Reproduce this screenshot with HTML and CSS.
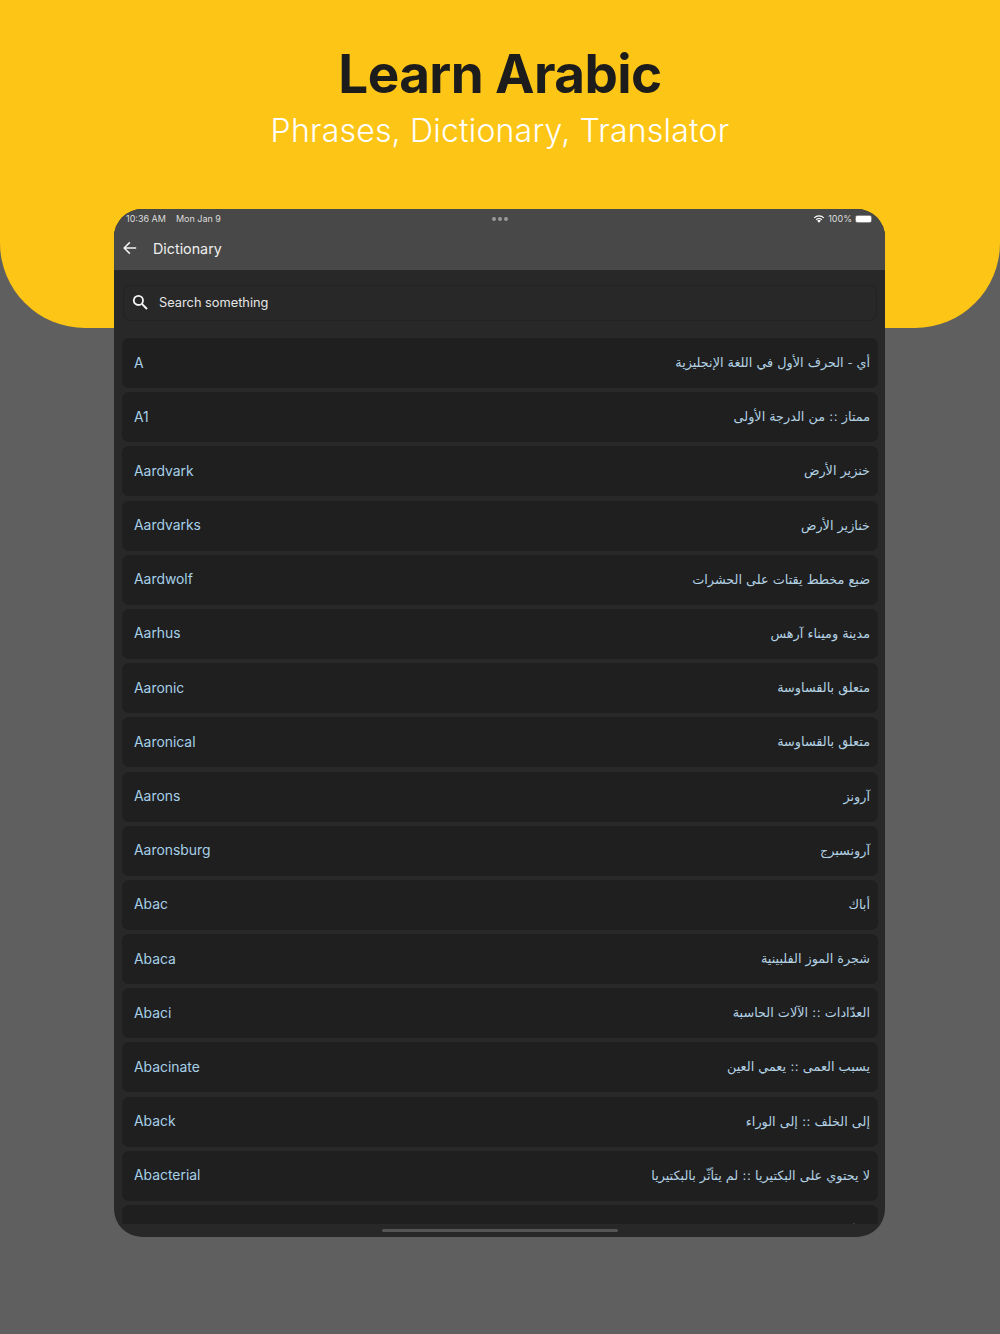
FILE: index.html
```html
<!DOCTYPE html>
<html lang="en">
<head>
    <meta charset="UTF-8">
    <meta name="viewport" content="width=device-width, initial-scale=1.0">
    <title>Learn Arabic</title>
    <link rel="stylesheet" href="styles.css">
</head>
<body>
    <header class="hero">
        <h1 class="hero-title">Learn Arabic</h1>
        <p class="hero-subtitle">Phrases, Dictionary, Translator</p>
    </header>

    <main class="tablet">
        <div class="topbar">
            <div class="status">
                <div class="status-left">
                    <span>10:36 AM</span>
                    <span>Mon Jan 9</span>
                </div>
                <div class="status-dots"><i></i><i></i><i></i></div>
                <div class="status-right">
                    <svg class="wifi" viewBox="0 0 16 12" width="12" height="9">
                        <path d="M8 11.6 5.6 9a3.4 3.4 0 0 1 4.8 0z" fill="#fff"/>
                        <path d="M3.7 7.1a6.1 6.1 0 0 1 8.6 0l-1 1.1a4.7 4.7 0 0 0-6.6 0z" fill="#fff"/>
                        <path d="M1.1 4.5a9.8 9.8 0 0 1 13.8 0l-1 1.1a8.4 8.4 0 0 0-11.8 0z" fill="#fff"/>
                    </svg>
                    <span>100%</span>
                    <div class="battery"><div class="battery-fill"></div></div>
                </div>
            </div>
            <div class="appbar">
                <svg class="back" viewBox="0 0 14 14" width="14" height="14">
                    <path d="M13.2 7H1.4M6.8 1.4 1.2 7l5.6 5.6" fill="none" stroke="#f1f1f1" stroke-width="1.5"/>
                </svg>
                <span class="appbar-title">Dictionary</span>
            </div>
        </div>

        <div class="content">
            <div class="search">
                <svg class="search-icon" viewBox="0 0 16 16" width="16" height="16">
                    <circle cx="6.4" cy="6.4" r="4.6" fill="none" stroke="#f4f4f4" stroke-width="1.8"/>
                    <path d="M9.9 9.9 15 15" fill="none" stroke="#f4f4f4" stroke-width="2"/>
                </svg>
                <span>Search something</span>
            </div>

            <div class="list">
                <div class="row"><span>A</span><span class="ar" dir="rtl">أي - الحرف الأول في اللغة الإنجليزية</span></div>
                <div class="row"><span>A1</span><span class="ar" dir="rtl">ممتاز :: من الدرجة الأولى</span></div>
                <div class="row"><span>Aardvark</span><span class="ar" dir="rtl">خنزير الأرض</span></div>
                <div class="row"><span>Aardvarks</span><span class="ar" dir="rtl">خنازير الأرض</span></div>
                <div class="row"><span>Aardwolf</span><span class="ar" dir="rtl">ضبع مخطط يقتات على الحشرات</span></div>
                <div class="row"><span>Aarhus</span><span class="ar" dir="rtl">مدينة وميناء آرهس</span></div>
                <div class="row"><span>Aaronic</span><span class="ar" dir="rtl">متعلق بالقساوسة</span></div>
                <div class="row"><span>Aaronical</span><span class="ar" dir="rtl">متعلق بالقساوسة</span></div>
                <div class="row"><span>Aarons</span><span class="ar" dir="rtl">آرونز</span></div>
                <div class="row"><span>Aaronsburg</span><span class="ar" dir="rtl">آرونسبرج</span></div>
                <div class="row"><span>Abac</span><span class="ar" dir="rtl">أباك</span></div>
                <div class="row"><span>Abaca</span><span class="ar" dir="rtl">شجرة الموز الفلبينية</span></div>
                <div class="row"><span>Abaci</span><span class="ar" dir="rtl">العدّادات :: الآلات الحاسبة</span></div>
                <div class="row"><span>Abacinate</span><span class="ar" dir="rtl">يسبب العمى :: يعمي العين</span></div>
                <div class="row"><span>Aback</span><span class="ar" dir="rtl">إلى الخلف :: إلى الوراء</span></div>
                <div class="row"><span>Abacterial</span><span class="ar" dir="rtl">لا يحتوي على البكتيريا :: لم يتأثّر بالبكتيريا</span></div>
                <div class="row"><span>Abacus</span><span class="ar" dir="rtl">العدّاد</span></div>
            </div>

            <div class="home-strip"><div class="home-bar"></div></div>
        </div>
    </main>
</body>
</html>
```

FILE: styles.css
```css
* {
    box-sizing: border-box;
}

body {
    margin: 0;
    height: 1334px;
    overflow: hidden;
    background-color: #5f5f5f;
    font-family: Inter, "DejaVu Sans", sans-serif;
}

.hero {
    height: 328px;
    padding-top: 42px;
    background: #fdc516;
    border-radius: 0 0 85px 85px;
    text-align: center;
}

.hero-title {
    margin: 0;
    font-size: 53px;
    line-height: 64px;
    font-weight: 700;
    letter-spacing: -0.6px;
    color: #1c1c1c;
}

.hero-subtitle {
    margin: 4px 0 0;
    font-size: 32px;
    line-height: 42px;
    font-weight: 300;
    letter-spacing: 0.2px;
    color: #fff;
}

.tablet {
    position: relative;
    display: flex;
    flex-direction: column;
    width: 771px;
    height: 1028px;
    margin: -119px 0 0 114px;
    border-radius: 28px;
    overflow: hidden;
    background: #282828;
}

.topbar {
    height: 61px;
    background: #484848;
    color: #eee;
}

.status {
    display: flex;
    justify-content: space-between;
    align-items: center;
    height: 19px;
    padding: 0 12px;
    font-size: 9px;
    color: #ddd;
}

.status-left,
.status-right {
    display: flex;
    align-items: center;
    width: 140px;
}

.status-left {
    gap: 10px;
}

.status-right {
    justify-content: flex-end;
    gap: 3px;
}

.status-dots {
    display: flex;
    gap: 2px;
}

.status-dots i {
    width: 4px;
    height: 4px;
    border-radius: 50%;
    background: #999;
}

.battery {
    width: 17px;
    height: 8px;
    margin-right: 1px;
    border: 1px solid #8a8a8a;
    border-radius: 2.5px;
}

.battery-fill {
    height: 100%;
    border-radius: 1px;
    background: #fff;
}

.appbar {
    display: flex;
    align-items: center;
    height: 40px;
    padding-left: 9px;
}

.back {
    margin-right: 16px;
}

.appbar-title {
    font-size: 14.3px;
    color: #eee;
}

.content {
    position: relative;
    display: flex;
    flex: 1;
    flex-direction: column;
    min-height: 0;
}

.search {
    display: flex;
    align-items: center;
    height: 36px;
    margin: 15px 8px 0 9px;
    padding: 0 0 2px 8px;
    border: 1px solid #222;
    border-radius: 7px;
    background: #282828;
    font-size: 12.8px;
    color: #e6e6e6;
}

.search-icon {
    margin-right: 11px;
}

.list {
    display: flex;
    flex: 1;
    flex-direction: column;
    gap: 4.2px;
    min-height: 0;
    margin-top: 17px;
    padding: 0 7px 0 8px;
    overflow: hidden;
}

.row {
    display: flex;
    flex: none;
    justify-content: space-between;
    align-items: center;
    height: 50px;
    padding: 0 8px 1px 12px;
    border-radius: 7px;
    background: #1f1f1f;
    font-size: 13.9px;
    color: #a6d0e8;
}

.ar {
    font-family: "DejaVu Sans", sans-serif;
    font-size: 12.8px;
    color: #b3d2e4;
}

.home-strip {
    flex: none;
    height: 13px;
    padding-top: 5px;
}

.home-bar {
    width: 236px;
    height: 3px;
    margin: 0 auto;
    border-radius: 2px;
    background: #555;
}
```
